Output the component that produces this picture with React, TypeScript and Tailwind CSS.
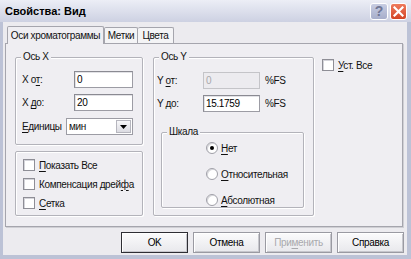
import React from "react";

const PANEL = "bg-[#efeef2]";

function U({ children }: { children: React.ReactNode }) {
  return <span className="underline underline-offset-[2px]">{children}</span>;
}

function Group({ label, className = "", children }: { label?: string; className?: string; children?: React.ReactNode }) {
  return (
    <div className={`relative rounded-[2px] border border-[#b3b3ba] shadow-[inset_1px_1px_0_#ffffff,1px_1px_0_#ffffff] ${className}`}>
      {label ? (
        <span className={`absolute -top-[8px] left-[5px] px-[2px] leading-[14px] ${PANEL}`}>{label}</span>
      ) : null}
      {children}
    </div>
  );
}

function Field({ value, disabled, className = "" }: { value: string; disabled?: boolean; className?: string }) {
  return (
    <div
      className={`h-[17px] flex items-center pl-[2px] border ${
        disabled
          ? "border-[#c4c4c8] bg-[#ecebef] text-[#a8a8ac]"
          : "border-[#9c9ca4] border-t-[#8a8a92] border-l-[#8a8a92] bg-white text-black shadow-[inset_1px_1px_0_#e2e2e6]"
      } ${className}`}
    >
      {value}
    </div>
  );
}

function Check({ children }: { children: React.ReactNode }) {
  return (
    <div className="h-[14px] flex items-center gap-[4px]">
      <span className="shrink-0 w-[12px] h-[12px] border border-[#8e8e96] bg-white shadow-[inset_1px_1px_0_#d4d4da]" />
      <span>{children}</span>
    </div>
  );
}

function Radio({ on, children }: { on?: boolean; children: React.ReactNode }) {
  return (
    <div className="h-[14px] flex items-center gap-[3px]">
      <span className="shrink-0 w-[12px] h-[12px] rounded-full border border-[#a0a0a8] bg-white flex items-center justify-center shadow-[inset_1px_1px_0_#d8d8dc]">
        {on ? <span className="w-[4px] h-[4px] rounded-full bg-black" /> : null}
      </span>
      <span>{children}</span>
    </div>
  );
}

function Btn({ children, def, disabled }: { children: React.ReactNode; def?: boolean; disabled?: boolean }) {
  return (
    <div
      className={`w-[67px] h-[21px] flex items-center justify-center border ${
        def ? "border-[#2e2e34]" : "border-[#9a9aa2]"
      } bg-gradient-to-b from-[#fbfbfc] to-[#e8e8ec] shadow-[inset_1px_1px_0_#ffffff,inset_-1px_-1px_0_#c6c6cc] ${
        disabled ? "text-[#a9a9ad]" : "text-black"
      }`}
    >
      {children}
    </div>
  );
}

export default function App() {
  return (
    <div className="w-[411px] h-[259px] flex flex-col bg-[#bcc2d6] text-[10px] leading-[13px] tracking-[-0.35px] text-[#111111] whitespace-nowrap font-['Liberation_Sans',Arial,sans-serif] overflow-hidden">
      {/* title bar */}
      <div className="h-[22px] flex items-center bg-gradient-to-b from-[#eceef6] to-[#cdd1e2] pl-[5px] pr-[4px]">
        <span className="font-bold text-[11px] tracking-normal text-black">Свойства: Вид</span>
        <div className="ml-auto flex items-center gap-[2px]">
          <div className="w-[18px] h-[17px] rounded-[3px] border border-white bg-gradient-to-b from-[#c8cde2] to-[#a7aecb] flex items-center justify-center text-[#6f7695] text-[14px] font-bold leading-none tracking-normal">
            ?
          </div>
          <div className="w-[17px] h-[17px] rounded-[3px] border border-white bg-gradient-to-b from-[#ee7a5c] to-[#d34424] flex items-center justify-center">
            <svg width="11" height="11" viewBox="0 0 11 11">
              <path d="M1.5 1.5 L9.5 9.5 M9.5 1.5 L1.5 9.5" stroke="#ffffff" strokeWidth="2.2" strokeLinecap="square" />
            </svg>
          </div>
        </div>
      </div>

      {/* body */}
      <div className="flex-1 ml-[3px] mr-[4px] mb-[4px] bg-[#ecebef] flex flex-col">
        {/* tabs */}
        <div className="relative z-10 mt-[3px] ml-[4px] flex items-end h-[18px]">
          <div className={`w-[97px] h-[18px] -mb-px border border-b-0 border-[#a5a5ad] rounded-t-[2px] flex items-center justify-center ${PANEL}`}>
            Оси хроматограммы
          </div>
          <div className="w-[34px] h-[16px] border border-b-0 border-[#a5a5ad] rounded-t-[2px] bg-[#f4f4f6] flex items-center justify-center">
            Метки
          </div>
          <div className="w-[36px] h-[16px] border border-b-0 border-l-0 border-[#a5a5ad] rounded-t-[2px] bg-[#f4f4f6] flex items-center justify-center">
            Цвета
          </div>
        </div>

        {/* panel */}
        <div className={`ml-[2px] w-[398px] h-[184px] border border-[#a5a5ad] shadow-[1px_1px_0_#cfcfd4] flex pl-[9px] pt-[13px] ${PANEL}`}>
          <div className="w-[128px] flex flex-col gap-[6px]">
            <Group label="Ось X" className="h-[88px] pl-[6px] pt-[13px] flex flex-col">
              <div className="flex items-center">
                <span className="w-[52px]">
                  X о<U>т</U>:
                </span>
                <Field value="0" className="w-[59px]" />
              </div>
              <div className="flex items-center mt-[6px]">
                <span className="w-[52px]">
                  X <U>д</U>о:
                </span>
                <Field value="20" className="w-[59px]" />
              </div>
              <div className="flex items-center mt-[7px]">
                <span className="w-[44px]">
                  <U>Е</U>диницы
                </span>
                <div className="w-[67px] h-[17px] border border-[#9c9ca4] bg-white flex items-center pl-[2px]">
                  <span>мин</span>
                  <div className="ml-auto mr-px w-[15px] h-[13px] bg-gradient-to-b from-[#f8f8fa] to-[#dcdce2] border border-[#b6b6be] flex items-center justify-center">
                    <svg width="7" height="4" viewBox="0 0 7 4">
                      <path d="M0 0 H7 L3.5 4 Z" fill="#000000" />
                    </svg>
                  </div>
                </div>
              </div>
            </Group>
            <Group className="h-[65px] pl-[7px] pt-[6px] flex flex-col gap-[5px]">
              <Check>
                <U>П</U>оказать Все
              </Check>
              <Check>
                Компенсация дрей<U>ф</U>а
              </Check>
              <Check>
                <U>С</U>етка
              </Check>
            </Group>
          </div>

          <Group label="Ось Y" className="ml-[10px] w-[161px] h-[159px] pl-[3px] pt-[14px] flex flex-col">
            <div className="flex items-center">
              <span className="w-[46px]">
                Y <U>о</U>т:
              </span>
              <Field value="0" disabled className="w-[57px]" />
              <span className="ml-[5px]">%FS</span>
            </div>
            <div className="flex items-center mt-[6px]">
              <span className="w-[46px]">Y до:</span>
              <Field value="15.1759" className="w-[57px]" />
              <span className="ml-[5px]">%FS</span>
            </div>
            <Group label="Шкала" className="mt-[20px] ml-[4px] w-[143px] h-[76px] pl-[44px] pt-[8px] flex flex-col gap-[12px]">
              <Radio on>
                <U>Н</U>ет
              </Radio>
              <Radio>
                <U>О</U>тносительная
              </Radio>
              <Radio>
                <U>А</U>бсолютная
              </Radio>
            </Group>
          </Group>

          <div className="ml-[8px] mt-[1px]">
            <Check>
              <U>У</U>ст. Все
            </Check>
          </div>
        </div>

        {/* buttons */}
        <div className="mt-[5px] flex items-center pl-[118px] gap-[5px]">
          <Btn def>OK</Btn>
          <Btn>Отмена</Btn>
          <Btn disabled>
            При<U>м</U>енить
          </Btn>
          <Btn>Справка</Btn>
        </div>
      </div>
    </div>
  );
}
